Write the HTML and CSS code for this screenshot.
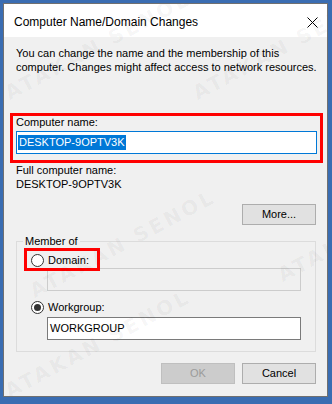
FILE: index.html
```html
<!DOCTYPE html>
<html>
<head>
<meta charset="utf-8">
<link rel="stylesheet" href="styles.css">
</head>
<body>
<div class="window">
  <div class="titlebar">
    <span class="title">Computer Name/Domain Changes</span>
    <svg class="close" width="11" height="11" viewBox="0 0 11 11"><path d="M0.5 0.5 L10.5 10.5 M10.5 0.5 L0.5 10.5" stroke="#000" stroke-width="1" fill="none"/></svg>
  </div>
  <div class="content">
    <p class="intro">You can change the name and the membership of this<br>computer. Changes might affect access to network resources.</p>
    <div class="name-field highlight">
      <div class="label">Computer name:</div>
      <div class="input focused"><span class="selected">DESKTOP-9OPTV3K</span></div>
    </div>
    <div class="full">
      <div>Full computer name:</div>
      <div>DESKTOP-9OPTV3K</div>
    </div>
    <div class="more-row"><button class="btn">More...</button></div>
    <fieldset class="group">
      <legend>Member of</legend>
      <div class="group-body">
        <div class="radio-row"><span class="domain-choice highlight"><span class="radio"></span><span>Domain:</span></span></div>
        <div class="input disabled sub"></div>
        <div class="radio-row second"><span class="radio checked"></span><span>Workgroup:</span></div>
        <div class="input sub wg">WORKGROUP</div>
      </div>
    </fieldset>
    <div class="actions"><button class="btn disabled">OK</button><button class="btn">Cancel</button></div>
  </div>
  <div class="watermarks">
    <span class="wm wm1">ATAKAN SENOL</span>
    <span class="wm wm2">ATAKAN SENOL</span>
    <span class="wm wm3">ATAKAN SENOL</span>
    <span class="wm wm4">ATAKAN SENOL</span>
    <span class="wm wm5">ATAKAN SENOL</span>
  </div>
</div>
</body>
</html>
```
FILE: styles.css
```css
html, body {
  margin: 0;
  padding: 0;
}
body {
  background: #3a6db2;
  font-family: "Liberation Sans", Arial, sans-serif;
  font-size: 11px;
  color: #000;
  width: 332px;
  height: 404px;
  overflow: hidden;
}
.window {
  position: relative;
  margin: 3px 0 0 3px;
  width: 325px;
  height: 394px;
  box-sizing: border-box;
  border: 1px solid #707070;
  background: #f0f0f0;
  display: flex;
  flex-direction: column;
}
.titlebar {
  height: 33px;
  flex: none;
  background: #fff;
  display: flex;
  align-items: flex-start;
  justify-content: space-between;
  padding: 11px 9px 0 10px;
  box-sizing: border-box;
}
.title {
  font-size: 12px;
  line-height: 14px;
}
.close {
  display: block;
  margin-top: 2px;
}
.content {
  flex: 1;
  padding: 9px 11px 0 12px;
  display: flex;
  flex-direction: column;
}
.intro {
  margin: 0;
  line-height: 14px;
  white-space: nowrap;
}
.highlight {
  position: relative;
}
.highlight::after {
  content: "";
  position: absolute;
  border: 3px solid #ff0000;
  pointer-events: none;
}
.name-field {
  margin-top: 42px;
}
.name-field::after {
  top: -3px;
  left: -6px;
  right: -7px;
  bottom: -9px;
}
.label {
  line-height: 13px;
}
.input {
  height: 23px;
  box-sizing: border-box;
  border: 1px solid #7a7a7a;
  background: #fff;
  padding: 0 2px;
  line-height: 21px;
  white-space: nowrap;
}
.focused {
  margin-top: 2px;
  margin-right: -1px;
  border-color: #0078d7;
  padding: 0 1px;
  display: flex;
  align-items: center;
}
.selected {
  display: inline-block;
  background: #0078d7;
  color: #fff;
  line-height: 15px;
  height: 15px;
  padding: 0 1px 0 1px;
}
.full {
  margin-top: 9px;
  line-height: 14px;
}
.more-row {
  display: flex;
  justify-content: flex-end;
  margin-top: 13px;
}
.btn {
  width: 74px;
  height: 21px;
  box-sizing: border-box;
  border: 1px solid #adadad;
  background: #e1e1e1;
  font-family: "Liberation Sans", Arial, sans-serif;
  font-size: 11px;
  color: #000;
  padding: 0;
  margin: 0;
  line-height: 19px;
}
.btn.disabled {
  background: #cccccc;
  border-color: #bfbfbf;
  color: #9b9b9b;
}
.group {
  margin: 10px 0 0 0;
  padding: 6px 14px 11px 6px;
  border: 1px solid #dcdcdc;
  min-width: 0;
}
.group legend {
  padding: 0 2px;
  line-height: 12px;
}
.group-body {
  padding-left: 8px;
}
.radio-row {
  height: 14px;
  display: flex;
  align-items: center;
  line-height: 14px;
}
.radio-row.second {
  margin-top: 9px;
}
.domain-choice {
  display: inline-flex;
  align-items: center;
}
.domain-choice::after {
  top: -5px;
  left: -7px;
  right: -11px;
  bottom: -4px;
}
.radio {
  width: 13px;
  height: 13px;
  box-sizing: border-box;
  border: 1px solid #333;
  border-radius: 50%;
  background: #fff;
  margin-right: 4px;
  position: relative;
  flex: none;
}
.radio.checked::before {
  content: "";
  position: absolute;
  left: 2px;
  top: 2px;
  width: 7px;
  height: 7px;
  border-radius: 50%;
  background: #333;
}
.sub {
  margin-left: 16px;
}
.disabled.sub {
  margin-top: 1px;
  background: #f0f0f0;
  border-color: #cccccc;
}
.wg {
  margin-top: 3px;
}
.actions {
  margin-top: 11px;
  display: flex;
  justify-content: flex-end;
  gap: 7px;
}
.watermarks {
  position: absolute;
  inset: 0;
  overflow: hidden;
  pointer-events: none;
}
.wm {
  position: absolute;
  font-family: "DejaVu Sans", sans-serif;
  font-weight: bold;
  font-size: 20px;
  line-height: 20px;
  letter-spacing: 3px;
  color: rgba(0, 0, 0, 0.045);
  white-space: nowrap;
  transform-origin: 0 100%;
  transform: rotate(-28deg);
}
.wm1 { left: 7px; top: 79px; }
.wm2 { left: 195px; top: 79px; }
.wm3 { left: 32px; top: 277px; }
.wm4 { left: 280px; top: 261px; }
.wm5 { left: 7px; top: 377px; }
```
